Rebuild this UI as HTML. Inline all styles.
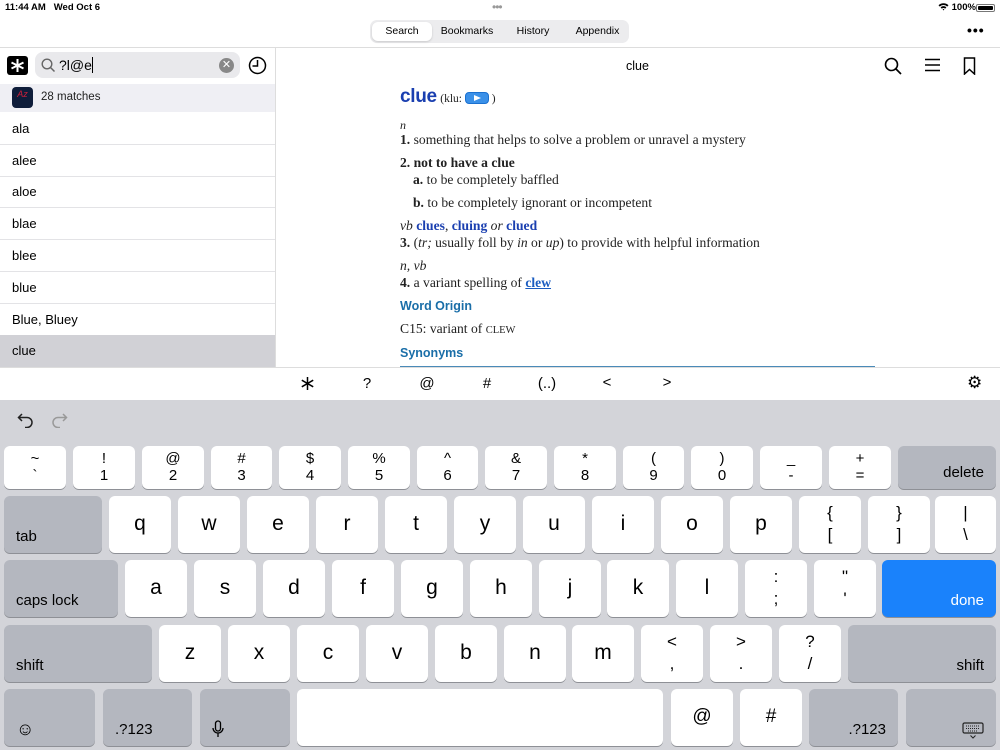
<!DOCTYPE html>
<html><head><meta charset="utf-8"><style>
*{box-sizing:border-box;margin:0;padding:0}
body{width:1000px;height:750px;overflow:hidden;background:#fff;font-family:"Liberation Sans",Arial,sans-serif;color:#000;position:relative}
.a{position:absolute}
.seg{left:370px;top:20px;width:259px;height:23px;background:#ececee;border-radius:7px;font-size:10.5px}
.seg div{position:absolute;top:0;height:23px;line-height:23px;text-align:center}
.list div.r{position:absolute;left:0;width:275px;height:32px;line-height:32px;padding-left:12px;font-size:13px;border-bottom:1px solid #e3e3e6}
.ser{font-family:"Liberation Serif",serif;font-size:13.6px;color:#222}
.blue{color:#1a3fb0}
.hd{color:#1a6ea8;font-weight:bold;font-family:"Liberation Sans",sans-serif;font-size:12.5px}
.tb{top:368px;font-size:15px;text-align:center;width:20px}
.kb{left:0;top:400px;width:1000px;height:350px;background:#d3d4d9}
.k{position:absolute;background:#fff;border-radius:6px;box-shadow:0 1px 0 #8e9096;text-align:center;font-size:21px;color:#000}
.s{background:#b4b7bf}
.k.l{line-height:55px}
.d{font-size:15px;line-height:17px;padding-top:4px}
.lb{position:absolute;left:12px;bottom:8px;font-size:15px}
.rb{position:absolute;right:12px;bottom:8px;font-size:15px}
</style></head><body>
<div class="a" style="left:5px;top:2px;font-size:9.5px;font-weight:bold">11:44 AM&nbsp;&nbsp; Wed Oct 6</div>
<div class="a" style="left:492px;top:0px;font-size:12px;color:#999;letter-spacing:-1px">•••</div>
<div class="a" style="left:938px;top:2px;font-size:9.5px;font-weight:bold">
<svg width="11" height="9" viewBox="0 0 11 9" style="vertical-align:-1px"><path d="M0.5 3.3A7 7 0 0 1 10.5 3.3L9.2 4.6A5.2 5.2 0 0 0 1.8 4.6Z M2.6 5.4A4 4 0 0 1 8.4 5.4L7.1 6.7A2.2 2.2 0 0 0 3.9 6.7Z M4.6 7.4A1.3 1.3 0 0 1 6.4 7.4L5.5 8.5Z" fill="#000"/></svg> 100%</div>
<div class="a" style="left:976px;top:4px;width:19px;height:8px;border:1px solid #777;border-radius:2px;padding:1px"><div style="background:#000;width:100%;height:100%;border-radius:1px"></div></div>
<div class="a seg">
<div style="left:2px;top:2px;height:19px;line-height:19px;width:60px;background:#fff;border-radius:6px;box-shadow:0 1px 2px rgba(0,0,0,.15)">Search</div>
<div style="left:64px;width:66px">Bookmarks</div>
<div style="left:130px;width:66px">History</div>
<div style="left:196px;width:63px">Appendix</div>
</div>
<div class="a" style="left:967px;top:22px;font-size:14px;letter-spacing:1px;font-weight:bold">•••</div>
<div class="a" style="left:0;top:47px;width:1000px;height:1px;background:#ddd"></div>
<div class="a" style="left:275px;top:47px;width:1px;height:321px;background:#ddd"></div>
<!-- left top -->
<svg class="a" style="left:7px;top:56px" width="21" height="19"><rect width="21" height="19" rx="3" fill="#000"/><path d="M10.5 3V16M4.5 6.5L16.5 12.5M16.5 6.5L4.5 12.5" stroke="#fff" stroke-width="2"/></svg>
<div class="a" style="left:35px;top:52px;width:205px;height:26px;background:#e9e9ec;border-radius:8px"></div>
<svg class="a" style="left:41px;top:58px" width="15" height="15"><circle cx="6" cy="6" r="4.8" fill="none" stroke="#666" stroke-width="1.4"/><path d="M9.5 9.5L13.5 13.5" stroke="#666" stroke-width="1.5"/></svg>
<div class="a" style="left:59px;top:57px;font-size:14px">?l@e<span style="display:inline-block;width:1.5px;height:16px;background:#000;vertical-align:-3px"></span></div>
<div class="a" style="left:219px;top:58px;width:15px;height:15px;border-radius:50%;background:#888;color:#fff;font-size:11px;line-height:15px;text-align:center">✕</div>
<svg class="a" style="left:248px;top:56px" width="19" height="19"><circle cx="9.5" cy="9.5" r="8" fill="none" stroke="#000" stroke-width="1.5"/><path d="M9.5 4V10H4.5" fill="none" stroke="#000" stroke-width="1.5"/></svg>
<div class="a" style="left:0;top:84px;width:275px;height:28px;background:#efeff4"></div>
<div class="a" style="left:12px;top:87px;width:21px;height:21px;background:#0f1d3a;border-radius:4px;color:#d0203a;font-size:9px;font-style:italic;text-align:center;line-height:14px">Az</div>
<div class="a" style="left:41px;top:91px;font-size:11.5px;color:#222">28 matches</div>
<div class="list">
<div class="r" style="top:113px">ala</div>
<div class="r" style="top:145px">alee</div>
<div class="r" style="top:176px">aloe</div>
<div class="r" style="top:208px">blae</div>
<div class="r" style="top:240px">blee</div>
<div class="r" style="top:272px">blue</div>
<div class="r" style="top:304px">Blue, Bluey</div>
<div class="r" style="top:335px;background:#d1d1d6;border:none;height:33px">clue</div>
</div>
<!-- right header -->
<div class="a" style="left:626px;top:59px;font-size:12.5px">clue</div>
<svg class="a" style="left:884px;top:57px" width="18" height="18"><circle cx="7.5" cy="7.5" r="6" fill="none" stroke="#000" stroke-width="1.6"/><path d="M12 12L17 17" stroke="#000" stroke-width="1.7"/></svg>
<svg class="a" style="left:924px;top:58px" width="17" height="14"><path d="M1 1.5H16M1 7H16M1 12.5H16" stroke="#000" stroke-width="1.5"/></svg>
<svg class="a" style="left:963px;top:57px" width="13" height="18"><path d="M1.5 1H11.5V17L6.5 12.5L1.5 17Z" fill="none" stroke="#000" stroke-width="1.5"/></svg>
<!-- entry -->
<div class="a ser" style="left:400px;top:86px;width:520px">
<div style="height:27px"><span class="blue" style="font-size:19px;font-weight:bold;font-family:'Liberation Sans',sans-serif;letter-spacing:-.3px">clue</span> <span style="font-size:11.5px">(klu: <span style="display:inline-block;width:24px;height:12px;border:1.5px solid #1a70d0;border-radius:4px;background:#3a90e8;vertical-align:-2px;position:relative"><span style="position:absolute;left:8px;top:2px;border-left:7px solid #fff;border-top:3px solid transparent;border-bottom:3px solid transparent"></span></span> )</span></div>
<div style="position:absolute;top:32px;font-style:italic;font-size:12px">n</div>
<div style="position:absolute;top:46px"><b>1.</b> something that helps to solve a problem or unravel a mystery</div>
<div style="position:absolute;top:69px"><b>2. not to have a clue</b></div>
<div style="position:absolute;top:86px;left:13px"><b>a.</b> to be completely baffled</div>
<div style="position:absolute;top:109px;left:13px"><b>b.</b> to be completely ignorant or incompetent</div>
<div style="position:absolute;top:132px"><i>vb</i> <b class="blue">clues</b>, <b class="blue">cluing</b> <i>or</i> <b class="blue">clued</b></div>
<div style="position:absolute;top:149px"><b>3.</b> (<i>tr;</i> usually foll by <i>in</i> or <i>up</i>) to provide with helpful information</div>
<div style="position:absolute;top:172px"><i>n, vb</i></div>
<div style="position:absolute;top:189px"><b>4.</b> a variant spelling of <b class="blue" style="text-decoration:underline;color:#1a5cc0">clew</b></div>
<div class="hd" style="position:absolute;top:213px">Word Origin</div>
<div style="position:absolute;top:235px">C15: variant of <span style="font-size:10.5px">CLEW</span></div>
<div class="hd" style="position:absolute;top:260px">Synonyms</div>
</div>
<div class="a" style="left:400px;top:366px;width:475px;height:1px;background:#4a8ab8"></div>
<div class="a" style="left:0;top:367px;width:1000px;height:1px;background:#ddd"></div>
<!-- toolbar -->
<svg class="a" style="left:301px;top:377px" width="13" height="13"><path d="M6.5 0V13M0.8 3.2L12.2 9.8M12.2 3.2L0.8 9.8" stroke="#000" stroke-width="1.5"/></svg>
<div class="a tb" style="left:357px;top:375px">?</div>
<div class="a tb" style="left:417px;top:375px">@</div>
<div class="a tb" style="left:477px;top:375px">#</div>
<div class="a tb" style="left:532px;top:375px;width:30px">(..)</div>
<div class="a tb" style="left:597px;top:374px">&lt;</div>
<div class="a tb" style="left:657px;top:374px">&gt;</div>
<div class="a" style="left:967px;top:373px;font-size:17px">⚙</div>
<!-- keyboard -->
<div class="a kb"></div>
<svg class="a" style="left:17px;top:411px" width="18" height="17"><path d="M5 3L1.5 6.5L5 10M1.5 6.5H10A5 5 0 0 1 10 16.5H8" fill="none" stroke="#222" stroke-width="1.5"/></svg>
<svg class="a" style="left:50px;top:411px" width="18" height="17"><path d="M13 3L16.5 6.5L13 10M16.5 6.5H8A5 5 0 0 0 8 16.5H10" fill="none" stroke="#999" stroke-width="1.5"/></svg>
<!-- row1 -->
<div class="k d" style="left:4px;top:446px;width:62px;height:43px">~<br>`</div>
<div class="k d" style="left:73px;top:446px;width:62px;height:43px">!<br>1</div>
<div class="k d" style="left:142px;top:446px;width:62px;height:43px">@<br>2</div>
<div class="k d" style="left:211px;top:446px;width:61px;height:43px">#<br>3</div>
<div class="k d" style="left:279px;top:446px;width:62px;height:43px">$<br>4</div>
<div class="k d" style="left:348px;top:446px;width:62px;height:43px">%<br>5</div>
<div class="k d" style="left:417px;top:446px;width:61px;height:43px">^<br>6</div>
<div class="k d" style="left:485px;top:446px;width:62px;height:43px">&amp;<br>7</div>
<div class="k d" style="left:554px;top:446px;width:62px;height:43px">*<br>8</div>
<div class="k d" style="left:623px;top:446px;width:61px;height:43px">(<br>9</div>
<div class="k d" style="left:691px;top:446px;width:62px;height:43px">)<br>0</div>
<div class="k d" style="left:760px;top:446px;width:62px;height:43px">_<br>-</div>
<div class="k d" style="left:829px;top:446px;width:62px;height:43px">+<br>=</div>
<div class="k s" style="left:898px;top:446px;width:98px;height:43px"><span class="rb">delete</span></div>
<!-- row2 -->
<div class="k s" style="left:4px;top:496px;width:98px;height:57px"><span class="lb">tab</span></div>
<div class="k l" style="left:109px;top:496px;width:62px;height:57px">q</div>
<div class="k l" style="left:178px;top:496px;width:62px;height:57px">w</div>
<div class="k l" style="left:247px;top:496px;width:62px;height:57px">e</div>
<div class="k l" style="left:316px;top:496px;width:62px;height:57px">r</div>
<div class="k l" style="left:385px;top:496px;width:62px;height:57px">t</div>
<div class="k l" style="left:454px;top:496px;width:62px;height:57px">y</div>
<div class="k l" style="left:523px;top:496px;width:62px;height:57px">u</div>
<div class="k l" style="left:592px;top:496px;width:62px;height:57px">i</div>
<div class="k l" style="left:661px;top:496px;width:62px;height:57px">o</div>
<div class="k l" style="left:730px;top:496px;width:62px;height:57px">p</div>
<div class="k d" style="left:799px;top:496px;width:62px;height:57px;font-size:17px;line-height:22px;padding-top:6px">{<br>[</div>
<div class="k d" style="left:868px;top:496px;width:62px;height:57px;font-size:17px;line-height:22px;padding-top:6px">}<br>]</div>
<div class="k d" style="left:935px;top:496px;width:61px;height:57px;font-size:17px;line-height:22px;padding-top:6px">|<br>\</div>
<!-- row3 -->
<div class="k s" style="left:4px;top:560px;width:114px;height:57px"><span class="lb">caps lock</span></div>
<div class="k l" style="left:125px;top:560px;width:62px;height:57px">a</div>
<div class="k l" style="left:194px;top:560px;width:62px;height:57px">s</div>
<div class="k l" style="left:263px;top:560px;width:62px;height:57px">d</div>
<div class="k l" style="left:332px;top:560px;width:62px;height:57px">f</div>
<div class="k l" style="left:401px;top:560px;width:62px;height:57px">g</div>
<div class="k l" style="left:470px;top:560px;width:62px;height:57px">h</div>
<div class="k l" style="left:539px;top:560px;width:62px;height:57px">j</div>
<div class="k l" style="left:607px;top:560px;width:62px;height:57px">k</div>
<div class="k l" style="left:676px;top:560px;width:62px;height:57px">l</div>
<div class="k d" style="left:745px;top:560px;width:62px;height:57px;font-size:17px;line-height:22px;padding-top:6px">:<br>;</div>
<div class="k d" style="left:814px;top:560px;width:62px;height:57px;font-size:17px;line-height:22px;padding-top:6px">"<br>'</div>
<div class="k" style="left:882px;top:560px;width:114px;height:57px;background:#1a82fb;color:#fff"><span class="rb">done</span></div>
<!-- row4 -->
<div class="k s" style="left:4px;top:625px;width:148px;height:57px"><span class="lb">shift</span></div>
<div class="k l" style="left:159px;top:625px;width:62px;height:57px">z</div>
<div class="k l" style="left:228px;top:625px;width:62px;height:57px">x</div>
<div class="k l" style="left:297px;top:625px;width:62px;height:57px">c</div>
<div class="k l" style="left:366px;top:625px;width:62px;height:57px">v</div>
<div class="k l" style="left:435px;top:625px;width:62px;height:57px">b</div>
<div class="k l" style="left:504px;top:625px;width:62px;height:57px">n</div>
<div class="k l" style="left:572px;top:625px;width:62px;height:57px">m</div>
<div class="k d" style="left:641px;top:625px;width:62px;height:57px;font-size:17px;line-height:22px;padding-top:6px">&lt;<br>,</div>
<div class="k d" style="left:710px;top:625px;width:62px;height:57px;font-size:17px;line-height:22px;padding-top:6px">&gt;<br>.</div>
<div class="k d" style="left:779px;top:625px;width:62px;height:57px;font-size:17px;line-height:22px;padding-top:6px">?<br>/</div>
<div class="k s" style="left:848px;top:625px;width:148px;height:57px"><span class="rb">shift</span></div>
<!-- row5 -->
<div class="k s" style="left:4px;top:689px;width:91px;height:57px"><span class="lb" style="font-size:18px;bottom:6px">☺</span></div>
<div class="k s" style="left:103px;top:689px;width:89px;height:57px"><span class="lb">.?123</span></div>
<div class="k s" style="left:200px;top:689px;width:90px;height:57px"><svg class="a" style="left:12px;top:31px" width="12" height="18"><rect x="3.5" y="1" width="5" height="10" rx="2.5" fill="none" stroke="#000" stroke-width="1.3"/><path d="M1 8A5 5 0 0 0 11 8M6 13V17" fill="none" stroke="#000" stroke-width="1.3"/></svg></div>
<div class="k" style="left:297px;top:689px;width:366px;height:57px"></div>
<div class="k l" style="left:671px;top:689px;width:62px;height:57px;font-size:19px">@</div>
<div class="k l" style="left:740px;top:689px;width:62px;height:57px;font-size:19px">#</div>
<div class="k s" style="left:809px;top:689px;width:89px;height:57px"><span class="rb">.?123</span></div>
<div class="k s" style="left:906px;top:689px;width:90px;height:57px"><svg class="a" style="left:56px;top:33px" width="22" height="18"><rect x="1" y="1" width="20" height="10" rx="1.5" fill="none" stroke="#222" stroke-width="1.2"/><path d="M4 4H18M4 6.5H18M6 9H16" stroke="#222" stroke-width="1" stroke-dasharray="1 1"/><path d="M8.5 13.5L11 16L13.5 13.5" fill="none" stroke="#222" stroke-width="1"/></svg></div>
</body></html>
